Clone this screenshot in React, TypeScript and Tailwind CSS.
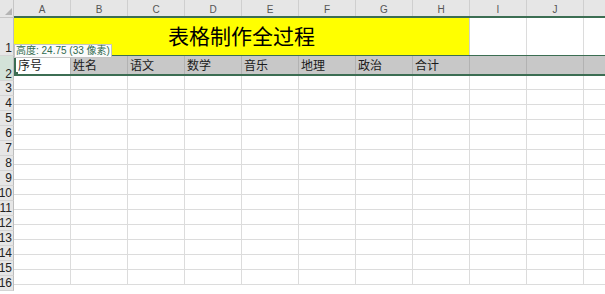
import React from "react";

const cols = ["A", "B", "C", "D", "E", "F", "G", "H", "I", "J", ""];
const heads = ["序号", "姓名", "语文", "数学", "音乐", "地理", "政治", "合计", "", "", ""];
const rows = [3, 4, 5, 6, 7, 8, 9, 10, 11, 12, 13, 14, 15, 16];

function RowNum({ n, className }: { n: number; className: string }) {
    return (
        <div
            className={`flex justify-end overflow-hidden border-b border-r border-b-[#d4d4d4] border-r-[#bdbdbd] pr-[1px] text-[12px] leading-none text-[#222] ${className}`}
        >
            {n}
        </div>
    );
}

export default function App() {
    return (
        <div className="relative h-[294px] w-[605px] overflow-hidden bg-white font-['Liberation_Sans','Noto_Sans_CJK_SC',sans-serif]">
            {/* Column header */}
            <div className="flex h-[18px]">
                <div className="flex h-[18px] w-[14px] shrink-0 items-end justify-end border-b border-r border-[#c6c6c6] bg-[#e6e6e6] pb-[2px] pr-[1px]">
                    <svg width="7" height="7" viewBox="0 0 7 7">
                        <polygon points="7,0 7,7 0,7" fill="#b4b4b4" />
                    </svg>
                </div>
                <div className="flex flex-1 border-b-2 border-[#3c6e53] bg-[#e6e6e6]">
                    {cols.map((c, i) => (
                        <div
                            key={i}
                            className="flex h-full w-[57px] shrink-0 items-center justify-center border-r border-[#cfcfcf] pt-[2px] text-[10px] text-[#555]"
                        >
                            {c}
                        </div>
                    ))}
                </div>
            </div>

            <div className="flex">
                {/* Row header */}
                <div className="flex w-[14px] shrink-0 flex-col bg-[#e6e6e6]">
                    <RowNum n={1} className="h-[38px] items-end pb-[1px]" />
                    <RowNum n={2} className="h-[25px] items-end bg-[#d3e2d8]" />
                    {rows.map((r) => (
                        <RowNum key={r} n={r} className="h-[15px] items-center" />
                    ))}
                </div>

                {/* Grid */}
                <div className="flex flex-1 flex-col">
                    <div className="flex h-[38px] border-b border-[#3c6e53]">
                        <div className="flex w-[456px] shrink-0 items-center justify-center border-r border-[#d0d0d0] bg-[#ffff00] pt-[1px] text-[21px] text-black">
                            表格制作全过程
                        </div>
                        <div className="w-[57px] shrink-0 border-r border-[#dcdcdc]" />
                        <div className="w-[57px] shrink-0 border-r border-[#dcdcdc]" />
                        <div className="flex-1" />
                    </div>

                    <div className="relative flex h-[20px] border-b-2 border-[#3c6e53] bg-[#c8c8c8]">
                        {heads.map((h, i) => (
                            <div
                                key={i}
                                className={`flex h-full w-[57px] shrink-0 items-center border-r border-[#b2b2b2] pl-[2px] pt-[2px] text-[12px] text-[#1a1a1a] ${
                                    i === 0 ? "border-l-2 border-l-[#3c6e53] bg-white pl-[1px]" : ""
                                }`}
                            >
                                {h}
                            </div>
                        ))}
                        <div className="absolute bottom-[-2px] left-0 h-[4px] w-[4px] bg-[#3c6e53]" />
                    </div>

                    {rows.map((r, ri) => (
                        <div
                            key={r}
                            className={`flex shrink-0 border-b border-[#dcdcdc] ${ri === 0 ? "h-[14px]" : "h-[15px]"}`}
                        >
                            {cols.map((c, i) => (
                                <div key={i} className="h-full w-[57px] shrink-0 border-r border-[#dcdcdc]" />
                            ))}
                        </div>
                    ))}
                </div>
            </div>

            {/* Row height tooltip */}
            <div className="absolute left-[14px] top-[44px] flex h-[14px] items-center whitespace-nowrap border border-[#c4c4c4] bg-[#fbfbfb] px-[1px] text-[10px] leading-none text-[#2f6a4e]">
                高度: 24.75 (33 像素)
            </div>
        </div>
    );
}
